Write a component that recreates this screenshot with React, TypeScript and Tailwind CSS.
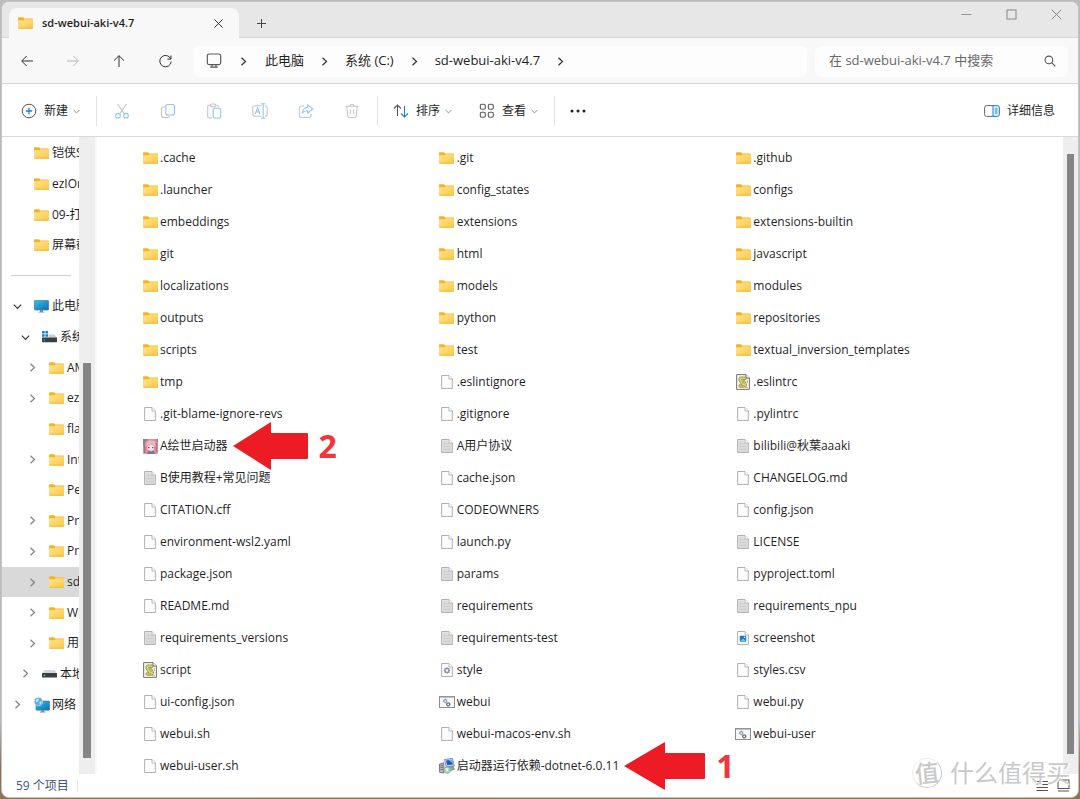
import React from 'react'
import { clsx } from 'clsx'

type IconKind =
  | 'folder'
  | 'file'
  | 'text'
  | 'script'
  | 'app'
  | 'image'
  | 'config'
  | 'batch'
  | 'installer'
  | 'pc'
  | 'drive'
  | 'system'
  | 'network'

interface FileEntry {
  name: string
  kind: IconKind
  step?: number
}

interface TreeEntry {
  name: string
  kind: IconKind
  level: 0 | 1 | 2
  state?: 'open' | 'closed'
  selected?: boolean
}

const files: FileEntry[] = [
  { name: '.cache', kind: 'folder' },
  { name: '.git', kind: 'folder' },
  { name: '.github', kind: 'folder' },
  { name: '.launcher', kind: 'folder' },
  { name: 'config_states', kind: 'folder' },
  { name: 'configs', kind: 'folder' },
  { name: 'embeddings', kind: 'folder' },
  { name: 'extensions', kind: 'folder' },
  { name: 'extensions-builtin', kind: 'folder' },
  { name: 'git', kind: 'folder' },
  { name: 'html', kind: 'folder' },
  { name: 'javascript', kind: 'folder' },
  { name: 'localizations', kind: 'folder' },
  { name: 'models', kind: 'folder' },
  { name: 'modules', kind: 'folder' },
  { name: 'outputs', kind: 'folder' },
  { name: 'python', kind: 'folder' },
  { name: 'repositories', kind: 'folder' },
  { name: 'scripts', kind: 'folder' },
  { name: 'test', kind: 'folder' },
  { name: 'textual_inversion_templates', kind: 'folder' },
  { name: 'tmp', kind: 'folder' },
  { name: '.eslintignore', kind: 'file' },
  { name: '.eslintrc', kind: 'script' },
  { name: '.git-blame-ignore-revs', kind: 'file' },
  { name: '.gitignore', kind: 'file' },
  { name: '.pylintrc', kind: 'file' },
  { name: 'A绘世启动器', kind: 'app', step: 2 },
  { name: 'A用户协议', kind: 'text' },
  { name: 'bilibili@秋葉aaaki', kind: 'text' },
  { name: 'B使用教程+常见问题', kind: 'text' },
  { name: 'cache.json', kind: 'file' },
  { name: 'CHANGELOG.md', kind: 'file' },
  { name: 'CITATION.cff', kind: 'file' },
  { name: 'CODEOWNERS', kind: 'file' },
  { name: 'config.json', kind: 'file' },
  { name: 'environment-wsl2.yaml', kind: 'file' },
  { name: 'launch.py', kind: 'file' },
  { name: 'LICENSE', kind: 'text' },
  { name: 'package.json', kind: 'file' },
  { name: 'params', kind: 'text' },
  { name: 'pyproject.toml', kind: 'file' },
  { name: 'README.md', kind: 'file' },
  { name: 'requirements', kind: 'text' },
  { name: 'requirements_npu', kind: 'text' },
  { name: 'requirements_versions', kind: 'text' },
  { name: 'requirements-test', kind: 'text' },
  { name: 'screenshot', kind: 'image' },
  { name: 'script', kind: 'script' },
  { name: 'style', kind: 'config' },
  { name: 'styles.csv', kind: 'file' },
  { name: 'ui-config.json', kind: 'file' },
  { name: 'webui', kind: 'batch' },
  { name: 'webui.py', kind: 'file' },
  { name: 'webui.sh', kind: 'file' },
  { name: 'webui-macos-env.sh', kind: 'file' },
  { name: 'webui-user', kind: 'batch' },
  { name: 'webui-user.sh', kind: 'file' },
  { name: '启动器运行依赖-dotnet-6.0.11', kind: 'installer', step: 1 },
]

const pinned: TreeEntry[] = [
  { name: '铠侠SD', kind: 'folder', level: 0 },
  { name: 'ezIOmeter', kind: 'folder', level: 0 },
  { name: '09-打包', kind: 'folder', level: 0 },
  { name: '屏幕截图', kind: 'folder', level: 0 },
]

const tree: TreeEntry[] = [
  { name: '此电脑', kind: 'pc', level: 0, state: 'open' },
  { name: '系统 (C:)', kind: 'system', level: 1, state: 'open' },
  { name: 'AMD', kind: 'folder', level: 2, state: 'closed' },
  { name: 'ezIOmeter', kind: 'folder', level: 2, state: 'closed' },
  { name: 'flash', kind: 'folder', level: 2 },
  { name: 'Intel', kind: 'folder', level: 2, state: 'closed' },
  { name: 'PerfLogs', kind: 'folder', level: 2 },
  { name: 'Program Files', kind: 'folder', level: 2, state: 'closed' },
  { name: 'Program Files (x86)', kind: 'folder', level: 2, state: 'closed' },
  { name: 'sd-webui-aki-v4.7', kind: 'folder', level: 2, state: 'closed', selected: true },
  { name: 'Windows', kind: 'folder', level: 2, state: 'closed' },
  { name: '用户', kind: 'folder', level: 2, state: 'closed' },
  { name: '本地磁盘', kind: 'drive', level: 1, state: 'closed' },
  { name: '网络', kind: 'network', level: 0, state: 'closed' },
]

function Folder() {
  return (
    <svg width="15" height="12" viewBox="0 0 15 12">
      <path d="M0 1.2Q0 .3.9.3H5L6.3 1.6H14.2Q15 1.6 15 2.4V6H0Z" fill="#f3b51d" />
      <path d="M0 3.2H5.4L6.6 2.3H15V10.8Q15 11.7 14.1 11.7H.9Q0 11.7 0 10.8Z" fill="url(#folderFace)" />
      <path d="M.3 11.2H14.7" stroke="#eab32f" strokeWidth=".8" />
    </svg>
  )
}

function Page({ fill = '#fcfcfc', children }: { fill?: string; children?: React.ReactNode }) {
  return (
    <svg width="12" height="14" viewBox="0 0 12 14">
      <path d="M.6.5H8L11.4 4V13.5H.6Z" fill={fill} stroke="#a8a8a8" strokeWidth=".9" />
      <path d="M8 .5V4H11.4" fill="#fff" stroke="#a8a8a8" strokeWidth=".8" />
      {children}
    </svg>
  )
}

function FileIcon({ kind }: { kind: IconKind }) {
  switch (kind) {
    case 'folder':
      return <Folder />
    case 'file':
      return <Page />
    case 'text':
      return (
        <Page fill="#e6e6e6">
          <path d="M2 3H6.5M2 4.5H10M2 6H10M2 7.5H10M2 9H10M2 10.5H10M2 12H10" stroke="#c6c6c6" strokeWidth=".8" />
        </Page>
      )
    case 'script':
      return (
        <svg width="14" height="16" viewBox="0 0 14 16">
          <path d="M.6.6H10L13.4 4V15.4H.6Z" fill="#f6f6ef" stroke="#777" />
          <path d="M10 .6V4H13.4" fill="#fff" stroke="#444" strokeWidth=".8" />
          <path d="M4.2 3H9.3Q11.2 3.6 9.8 5.4H7.4L10.4 9.5V11.6Q10 13.2 8.4 13.2H3.6Q2 12.2 3.4 10.8H5.6L3 6.6Q2.3 3.8 4.2 3Z" fill="#dcd96a" stroke="#77743c" strokeWidth=".7" />
          <path d="M5 5.6H7M5.6 7.3H8M6.5 9H8.8M5.5 11.8H8.4" stroke="#8a8747" strokeWidth=".7" />
          <path d="M9 13.6H12M11.3 6V9" stroke="#a5a49a" strokeWidth=".8" />
        </svg>
      )
    case 'app':
      return (
        <svg width="15" height="15" viewBox="0 0 15 15">
          <rect width="15" height="15" rx="1" fill="#d9939c" />
          <path d="M0 0H5L2 4L0 6Z" fill="#8d8094" />
          <path d="M3 4Q7-1 12 3L13.5 9L11 6.5L7 5.5L4 8.5Z" fill="#f0b5bb" />
          <path d="M4 8.2L7 5.8L11 7V10.5Q8 13 5 10.8Z" fill="#fbe3df" />
          <path d="M5 8.6H6.5M9 8.6H10.5" stroke="#5e5aa0" strokeWidth="1.2" />
          <path d="M4 15L5.5 11.5L8 13L10.5 11.5L12 15Z" fill="#6c78ac" />
          <path d="M1 5Q2.5 9 1.5 14M13.5 4Q12.5 9 14 13" stroke="#b8626f" strokeWidth="1.1" fill="none" />
          <path d="M12 0H15V4Z" fill="#91869c" />
        </svg>
      )
    case 'image':
      return (
        <Page>
          <rect x="2.8" y="4.7" width="6.4" height="6" rx=".7" fill="#1673d1" />
          <path d="M3 10.2L6 7.3L9 10.2Z" fill="#6bc4fa" />
          <circle cx="7.7" cy="6.2" r=".7" fill="#fff" />
        </Page>
      )
    case 'config':
      return (
        <Page>
          <circle cx="6" cy="7.5" r="2" fill="none" stroke="#8894a3" strokeWidth="1.4" />
          <path d="M6 4.2V5.5M6 9.5V10.8M2.7 7.5H4M8 7.5H9.3M3.7 5.2L4.6 6.1M7.4 8.9L8.3 9.8M8.3 5.2L7.4 6.1M4.6 8.9L3.7 9.8" stroke="#8894a3" />
        </Page>
      )
    case 'batch':
      return (
        <svg width="16" height="12" viewBox="0 0 16 12">
          <rect x=".5" y=".5" width="15" height="11" fill="#f7f7f7" stroke="#8d8d8d" />
          <path d="M1 1.3H15" stroke="#b3b3b3" />
          <circle cx="6.3" cy="5" r="1.5" fill="none" stroke="#9aa5b0" strokeWidth="1.3" />
          <circle cx="9.2" cy="8.3" r="1.5" fill="none" stroke="#6b7580" strokeWidth="1.3" />
          <path d="M6.3 2.6V3.4M4 5H4.8M9.2 10V10.8M10.9 8.3H11.7" stroke="#8d979f" strokeWidth=".9" />
        </svg>
      )
    case 'installer':
      return (
        <svg width="16" height="16" viewBox="0 0 16 16">
          <path d="M5.5 1.5L13.5.4L15.2 8L7.2 9Z" fill="#d3d9e0" stroke="#6d7a88" strokeWidth=".8" />
          <path d="M7 2.6L12.8 1.8L13.8 6.6L8.2 7.3Z" fill="#1557cf" />
          <path d="M9.5 2.3L12.8 1.8L13.5 5Z" fill="#62b9f5" />
          <path d="M6 9.5L14.5 8.6L15.3 11.5L8 13.5Z" fill="#9ea6ae" stroke="#59646e" strokeWidth=".6" />
          <path d="M.5 6L4.8 4.8V15L.5 14.2Z" fill="#b3b7bb" stroke="#5e656b" strokeWidth=".8" />
          <path d="M1.5 7.7L4 7.2M1.5 9.6L4 9.3M1.5 11.5H4" stroke="#5e656b" strokeWidth=".8" />
          <circle cx="8.2" cy="12.2" r="3.2" fill="#9fd8cb" stroke="#7f9a9f" strokeWidth=".6" />
          <path d="M5.8 10.6L8.2 12.2L9.6 9.4Z" fill="#e6f2a8" />
          <circle cx="8.2" cy="12.2" r="1" fill="#fff" />
        </svg>
      )
    case 'pc':
      return (
        <svg width="15" height="13" viewBox="0 0 15 13">
          <rect x=".4" y=".4" width="14.2" height="9.6" rx=".8" fill="url(#screenFace)" stroke="#3b7a98" strokeWidth=".7" />
          <path d="M6 10H9V11.8H6ZM4.5 11.8H10.5V12.6H4.5Z" fill="#7f8a92" />
        </svg>
      )
    case 'drive':
      return (
        <svg width="15" height="10" viewBox="0 0 15 10">
          <path d="M2.5 1H12.5L15 4H0Z" fill="#d5d8db" />
          <rect y="4" width="15" height="4.6" rx=".6" fill="#3b3e41" />
          <circle cx="2.4" cy="6.3" r=".9" fill="#39d353" />
        </svg>
      )
    case 'system':
      return (
        <svg width="15" height="12" viewBox="0 0 15 12">
          <path d="M0 0H2.7V2.5H0ZM3.4 0H6.1V2.5H3.4ZM0 3.2H2.7V5.7H0ZM3.4 3.2H6.1V5.7H3.4Z" fill="#0f86db" />
          <path d="M6.8 3.5H12L15 6.5H0L1 6.2H6.8Z" fill="#c9cdd1" />
          <rect y="6.5" width="15" height="4.7" rx=".6" fill="#3b3e41" />
          <circle cx="2.4" cy="9" r=".8" fill="#39d353" />
        </svg>
      )
    case 'network':
      return (
        <svg width="16" height="16" viewBox="0 0 16 16" className="shrink-0">
          <rect x="2" y="4" width="13.6" height="9.2" rx=".7" fill="url(#screenFace)" stroke="#3b7a98" strokeWidth=".6" />
          <path d="M7.5 13.2H10V14.6H7.5ZM6 14.6H11.5V15.4H6Z" fill="#7f8a92" />
          <circle cx="4.4" cy="4.5" r="4.1" fill="#58aede" stroke="#d6ecf8" strokeWidth=".6" />
          <path d="M1.5 3.5Q3 1 5 1.8L4.2 4.2L2.6 5.5ZM5.5 5L7.8 4L7 7L5.5 7.6Z" fill="#c4e6f7" />
        </svg>
      )
  }
}

function Chevron({ dir, size = 9, color = '#333' }: { dir: 'right' | 'down'; size?: number; color?: string }) {
  return (
    <svg width={size} height={size} viewBox="0 0 9 9" fill="none" stroke={color} strokeWidth="1.2" className="shrink-0">
      <path d={dir === 'right' ? 'M2.5.8L6.5 4.5L2.5 8.2' : 'M.8 2.6L4.5 6.3L8.2 2.6'} />
    </svg>
  )
}

function StepArrow({ step }: { step: number }) {
  return (
    <span className="pointer-events-none absolute top-1/2 left-full ml-1 flex -translate-y-1/2 items-center gap-[10px]">
      <svg width={step === 1 ? 83 : 77} height="48" viewBox={step === 1 ? '0 0 83 48' : '0 0 77 48'} className="shrink-0">
        <path
          d={
            step === 1
              ? 'M1 24L41 .5Q42 0 42 1V11H81Q82 11 82 12V36Q82 37 81 37H42V47Q42 48 41 47.5Z'
              : 'M1 24L38 .5Q39 0 39 1V11H75Q76 11 76 12V36Q76 37 75 37H39V47Q39 48 38 47.5Z'
          }
          fill="#ed1c24"
        />
      </svg>
      <span className="text-[32px] leading-none font-bold text-[#f5333b]">{step}</span>
    </span>
  )
}

function TreeRow({ entry }: { entry: TreeEntry }) {
  return (
    <li className="min-h-0 flex-1">
      <button
        className={clsx(
          'flex h-full w-full items-center overflow-hidden text-left whitespace-nowrap',
          entry.level === 0 && 'pl-[11px]',
          entry.level === 1 && 'pl-[19px]',
          entry.level === 2 && 'pl-[26px]',
          entry.selected && 'bg-[#d9d9d9]'
        )}
      >
        <span className="mr-3 flex w-[9px] shrink-0">
          {entry.state === 'open' && <Chevron dir="down" />}
          {entry.state === 'closed' && <Chevron dir="right" color="#808080" />}
        </span>
        <span className="mr-[3px] flex w-[15px] shrink-0 justify-center">
          <FileIcon kind={entry.kind} />
        </span>
        {entry.name}
      </button>
    </li>
  )
}

function ToolButton({ label, children }: { label: string; children: React.ReactNode }) {
  return (
    <button aria-label={label} className="flex h-8 w-[46px] items-center justify-center">
      <svg width="16" height="16" viewBox="0 0 16 16" fill="none" stroke="#c4c4c4" strokeWidth="1.1">
        {children}
      </svg>
    </button>
  )
}

function TitleBar() {
  return (
    <div className="flex h-9 items-end border-b border-[#d6d6d6] bg-[#e7e7e7]">
      <div className="-mb-px ml-[7px] flex h-[30px] w-[230px] items-center rounded-t-lg bg-[#f8f8f8] pl-[9px]">
        <Folder />
        <span className="ml-[9px] flex-1 text-[11px] font-semibold">sd-webui-aki-v4.7</span>
        <button aria-label="关闭标签页" className="mr-4">
          <svg width="9" height="9" viewBox="0 0 9 9" stroke="#333" fill="none">
            <path d="M.5.5L8.5 8.5M8.5.5L.5 8.5" />
          </svg>
        </button>
      </div>
      <button aria-label="新建标签页" className="mb-2 ml-[17px]">
        <svg width="11" height="11" viewBox="0 0 11 11" stroke="#444" fill="none">
          <path d="M5.5 1V10M1 5.5H10" />
        </svg>
      </button>
      <div className="mr-4 ml-auto flex gap-[34px] self-start pt-[7px]">
        <button aria-label="最小化">
          <svg width="11" height="11" viewBox="0 0 11 11" stroke="#999" fill="none">
            <path d="M.5 5.5H10.5" />
          </svg>
        </button>
        <button aria-label="最大化">
          <svg width="11" height="11" viewBox="0 0 11 11" stroke="#888" fill="none">
            <rect x="1" y="1" width="9" height="9" />
          </svg>
        </button>
        <button aria-label="关闭">
          <svg width="11" height="11" viewBox="0 0 11 11" stroke="#888" fill="none">
            <path d="M.7.7L10.3 10.3M10.3.7L.7 10.3" />
          </svg>
        </button>
      </div>
    </div>
  )
}

function AddressBar() {
  return (
    <div className="flex h-[46px] items-center border-b border-[#d6d6d6] bg-[#f8f8f8] pt-px pr-[10px] pl-[19px]">
      <div className="flex gap-[34px]">
        <button aria-label="后退">
          <svg width="12" height="12" viewBox="0 0 12 12" stroke="#333" fill="none">
            <path d="M12 6H.8M5.6 1L.7 6L5.6 11" />
          </svg>
        </button>
        <button aria-label="前进">
          <svg width="12" height="12" viewBox="0 0 12 12" stroke="#b5b5b5" fill="none">
            <path d="M0 6H11.2M6.4 1L11.3 6L6.4 11" />
          </svg>
        </button>
        <button aria-label="向上">
          <svg width="12" height="12" viewBox="0 0 12 12" stroke="#333" fill="none">
            <path d="M6 12V.8M1 5.6L6 .7L11 5.6" />
          </svg>
        </button>
        <button aria-label="刷新">
          <svg width="13" height="13" viewBox="0 0 13 13" stroke="#333" fill="none">
            <path d="M11.8 4A5.7 5.7 0 1 0 12.2 6.5M12 .5V4.1H8.4" />
          </svg>
        </button>
      </div>
      <nav aria-label="路径" className="ml-[22px] flex h-[31px] flex-1 items-center rounded-md bg-[#fdfdfd] pl-3 text-[13px]">
        <svg width="16" height="16" viewBox="0 0 16 16" stroke="#5a5a5a" fill="none" strokeWidth="1.2">
          <rect x="1.3" y="1" width="13.4" height="10.6" rx="1.8" />
          <path d="M6 11.8V13.7M10 11.8V13.7M4.3 14.1H11.7" />
        </svg>
        <span className="ml-[17px] flex">
          <Chevron dir="right" />
        </span>
        <a href="#pc" className="ml-[17px]">此电脑</a>
        <span className="ml-4 flex">
          <Chevron dir="right" />
        </span>
        <a href="#c" className="ml-4">系统 (C:)</a>
        <span className="ml-4 flex">
          <Chevron dir="right" />
        </span>
        <a href="#folder" className="ml-4">sd-webui-aki-v4.7</a>
        <span className="ml-4 flex">
          <Chevron dir="right" />
        </span>
      </nav>
      <label className="ml-2 flex h-[31px] w-[253px] items-center rounded-md bg-[#fdfdfd] pr-3 pl-[14px]">
        <input
          type="text"
          aria-label="搜索"
          placeholder="在 sd-webui-aki-v4.7 中搜索"
          className="min-w-0 flex-1 bg-transparent text-[13px] outline-none placeholder:text-[#686868]"
        />
        <svg width="12" height="12" viewBox="0 0 12 12" stroke="#555" fill="none" strokeWidth="1.1">
          <circle cx="4.9" cy="4.9" r="3.8" />
          <path d="M7.7 7.7L11.3 11.3" />
        </svg>
      </label>
    </div>
  )
}

function Toolbar() {
  return (
    <div className="flex h-[53px] items-center border-b border-[#d9d9d9] bg-white pt-0.5 pl-[19px] whitespace-nowrap">
      <button className="flex items-center">
        <svg width="16" height="16" viewBox="0 0 16 16" fill="none">
          <circle cx="8" cy="8" r="6.8" stroke="#555" />
          <path d="M8 4.8V11.2M4.8 8H11.2" stroke="#1683d8" strokeWidth="1.3" />
        </svg>
        <span className="mr-[5px] ml-[7px]">新建</span>
        <Chevron dir="down" size={7} color="#888" />
      </button>
      <div className="ml-4 h-[30px] w-px bg-[#e2e2e2]" />
      <div className="mx-0.5 flex">
        <ToolButton label="剪切">
          <path d="M3.5 1L10.3 11M12.5 1L5.7 11" />
          <circle cx="4" cy="12.7" r="2.3" stroke="#8fc7f0" />
          <circle cx="12" cy="12.7" r="2.3" stroke="#8fc7f0" />
        </ToolButton>
        <ToolButton label="复制">
          <path d="M5 4H3.5Q1.5 4 1.5 6V12.5Q1.5 14.5 3.5 14.5H7.5Q9.5 14.5 9.5 12.7" />
          <rect x="5.8" y="1.5" width="8.7" height="10.5" rx="2" stroke="#8fc7f0" />
        </ToolButton>
        <ToolButton label="粘贴">
          <path d="M4.5 2.3H3Q1.7 2.3 1.7 3.8V13.5Q1.7 15 3 15H6M9.5 2.3H11Q12.3 2.3 12.3 3.8V4.5" />
          <rect x="4.5" y="1" width="5" height="2.6" rx="1" />
          <rect x="7.2" y="5.3" width="7.5" height="9.7" rx="1.3" stroke="#8fc7f0" />
        </ToolButton>
        <ToolButton label="重命名">
          <path d="M9.5 2.7H3Q.8 2.7.8 4.7V11.3Q.8 13.3 3 13.3H9.5M12.8 2.7Q15.2 2.7 15.2 4.7V11.3Q15.2 13.3 12.8 13.3" />
          <path d="M9 .8H13.4M9 15.2H13.4M11.2.8V15.2M3.2 11L5.6 4.8L8 11M4 9H7.2" stroke="#8fc7f0" />
        </ToolButton>
        <ToolButton label="共享">
          <path d="M6 3H3.5Q1.3 3 1.3 5V12.3Q1.3 14.5 3.5 14.5H11Q13 14.5 13 12.3V11" />
          <path d="M9.7 1.8L14.8 6L9.7 10.2V7.8Q6 7.6 4.2 10.3Q4.8 4.8 9.7 4.3Z" stroke="#8fc7f0" />
        </ToolButton>
        <ToolButton label="删除">
          <path d="M1.3 3.3H14.7M5.8 3.2Q5.8 1.2 8 1.2Q10.2 1.2 10.2 3.2M2.8 3.5L3.8 13Q4 14.8 5.5 14.8H10.5Q12 14.8 12.2 13L13.2 3.5M6.3 6.5V11.3M9.7 6.5V11.3" />
        </ToolButton>
      </div>
      <div className="h-[30px] w-px bg-[#e2e2e2]" />
      <button className="ml-[15px] flex items-center">
        <svg width="16" height="16" viewBox="0 0 16 16" fill="none" strokeWidth="1.1">
          <path d="M4.5 13V2M1 5.5L4.5 2L8 5.5" stroke="#555" />
          <path d="M11.5 3V14M8 10.5L11.5 14L15 10.5" stroke="#1683d8" />
        </svg>
        <span className="mr-[5px] ml-[7px]">排序</span>
        <Chevron dir="down" size={7} color="#888" />
      </button>
      <button className="ml-[27px] flex items-center">
        <svg width="16" height="16" viewBox="0 0 16 16" fill="none" stroke="#555" strokeWidth="1.1">
          <rect x="1.3" y="1.3" width="5" height="5" rx="1.5" />
          <rect x="9.3" y="1.3" width="5" height="5" rx="1.5" />
          <rect x="1.3" y="9.3" width="5" height="5" rx="1.5" />
          <rect x="9.3" y="9.3" width="5" height="5" rx="1.5" />
        </svg>
        <span className="mr-[5px] ml-[7px]">查看</span>
        <Chevron dir="down" size={7} color="#888" />
      </button>
      <div className="ml-4 h-[30px] w-px bg-[#e2e2e2]" />
      <button aria-label="查看更多" className="ml-[15px]">
        <svg width="16" height="16" viewBox="0 0 16 16" fill="#222">
          <circle cx="2" cy="8" r="1.5" />
          <circle cx="8" cy="8" r="1.5" />
          <circle cx="14" cy="8" r="1.5" />
        </svg>
      </button>
      <button className="mr-[23px] ml-auto flex items-center gap-[7px]">
        <svg width="16" height="16" viewBox="0 0 16 16" fill="none">
          <path d="M9 2.6H2.6Q.6 2.6.6 4.6V11.4Q.6 13.4 2.6 13.4H9" stroke="#666" />
          <path d="M9 2.6H13.4Q15.4 2.6 15.4 4.6V11.4Q15.4 13.4 13.4 13.4H9Z" fill="#d9eefc" stroke="#1683d8" />
          <path d="M11 6H13.4M11 8H13.4M11 10H13.4" stroke="#1683d8" />
        </svg>
        详细信息
      </button>
    </div>
  )
}

export default function App() {
  return (
    <div className="flex min-h-screen flex-col bg-linear-to-b from-[#bdbdbd] from-90% to-[#8d7352] to-96% p-px font-['Open_Sans','Noto_Sans_CJK_SC',sans-serif] text-xs text-[#1f1f1f]">
      <svg width="0" height="0" className="absolute">
        <defs>
          <linearGradient id="folderFace" x1="0" y1="0" x2="1" y2="1">
            <stop offset="0" stopColor="#ffe394" />
            <stop offset="1" stopColor="#fdc83f" />
          </linearGradient>
          <linearGradient id="screenFace" x1="0" y1="0" x2="1" y2="1">
            <stop offset="0" stopColor="#35c3e6" />
            <stop offset="1" stopColor="#0c6cb5" />
          </linearGradient>
        </defs>
      </svg>

      <div className="flex flex-1 flex-col overflow-hidden rounded-lg border border-[#c2c2c2] bg-white">
        <TitleBar />
        <AddressBar />
        <Toolbar />

        <div className="flex flex-1">
          {/* Navigation tree */}
          <nav aria-label="导航" className="w-[77px] shrink-0 overflow-hidden pt-px">
            <ul className="flex h-[582px] flex-col">
              {pinned.map(entry => (
                <TreeRow key={entry.name} entry={entry} />
              ))}
              <li aria-hidden="true" className="flex flex-1 items-center pr-2 pl-[9px]">
                <span className="h-px w-full bg-[#cfcfcf]" />
              </li>
              {tree.map(entry => (
                <TreeRow key={entry.name} entry={entry} />
              ))}
            </ul>
          </nav>
          <div className="flex w-4 shrink-0 flex-col bg-[#eeeeee] px-1">
            <div className="mt-[226px] mb-4 flex-1 bg-[#858585]" />
          </div>

          {/* File list */}
          <main className="flex-1 border-l-2 border-[#f8f8f8] pt-[5px] pr-[31px] pl-[45px]">
            <ul className="-mb-2 grid grid-cols-3">
              {files.map(file => (
                <li key={file.name} className="flex h-8 items-center">
                  <button className="relative flex items-center gap-0.5 whitespace-nowrap">
                    <span className="flex w-4 shrink-0 justify-center">
                      <FileIcon kind={file.kind} />
                    </span>
                    {file.name}
                    {file.step && <StepArrow step={file.step} />}
                  </button>
                </li>
              ))}
            </ul>
          </main>
          <div className="flex w-[15px] shrink-0 flex-col bg-[#eeeeee] px-1">
            <div className="mt-[17px] mb-5 flex-1 bg-[#858585]" />
          </div>
        </div>

        {/* Status bar */}
        <footer className="relative flex h-[23px] items-center pr-2 pl-[14px] text-[#40557a]">
          <span>59 个项目</span>
          <span className="ml-2 h-3 w-px bg-[#e6e6e6]" />
          <div className="ml-auto flex gap-2">
            <button aria-label="详细列表">
              <svg width="13" height="13" viewBox="0 0 13 13" stroke="#555" fill="none">
                <path d="M.5 2.5H12M.5 5.5H12M.5 8.5H12M.5 11.5H12" />
              </svg>
            </button>
            <button aria-label="大图标">
              <svg width="13" height="13" viewBox="0 0 13 13" stroke="#555" fill="none">
                <rect x="1" y="1" width="11" height="8.5" />
                <path d="M1 12H12" />
              </svg>
            </button>
          </div>
          <div className="pointer-events-none absolute right-2 bottom-[9px] flex items-center gap-2 text-[#c9c9c9]">
            <span className="flex size-[30px] items-center justify-center rounded-full border border-t-[#eeeeee] border-r-[#c9c9c9] border-b-[#c9c9c9] border-l-[#eeeeee] text-2xl leading-none font-medium">
              <span className="-rotate-6">值</span>
            </span>
            <span className="text-2xl leading-none [text-shadow:1px_1px_0_#fff]">什么值得买</span>
          </div>
        </footer>
      </div>
    </div>
  )
}
